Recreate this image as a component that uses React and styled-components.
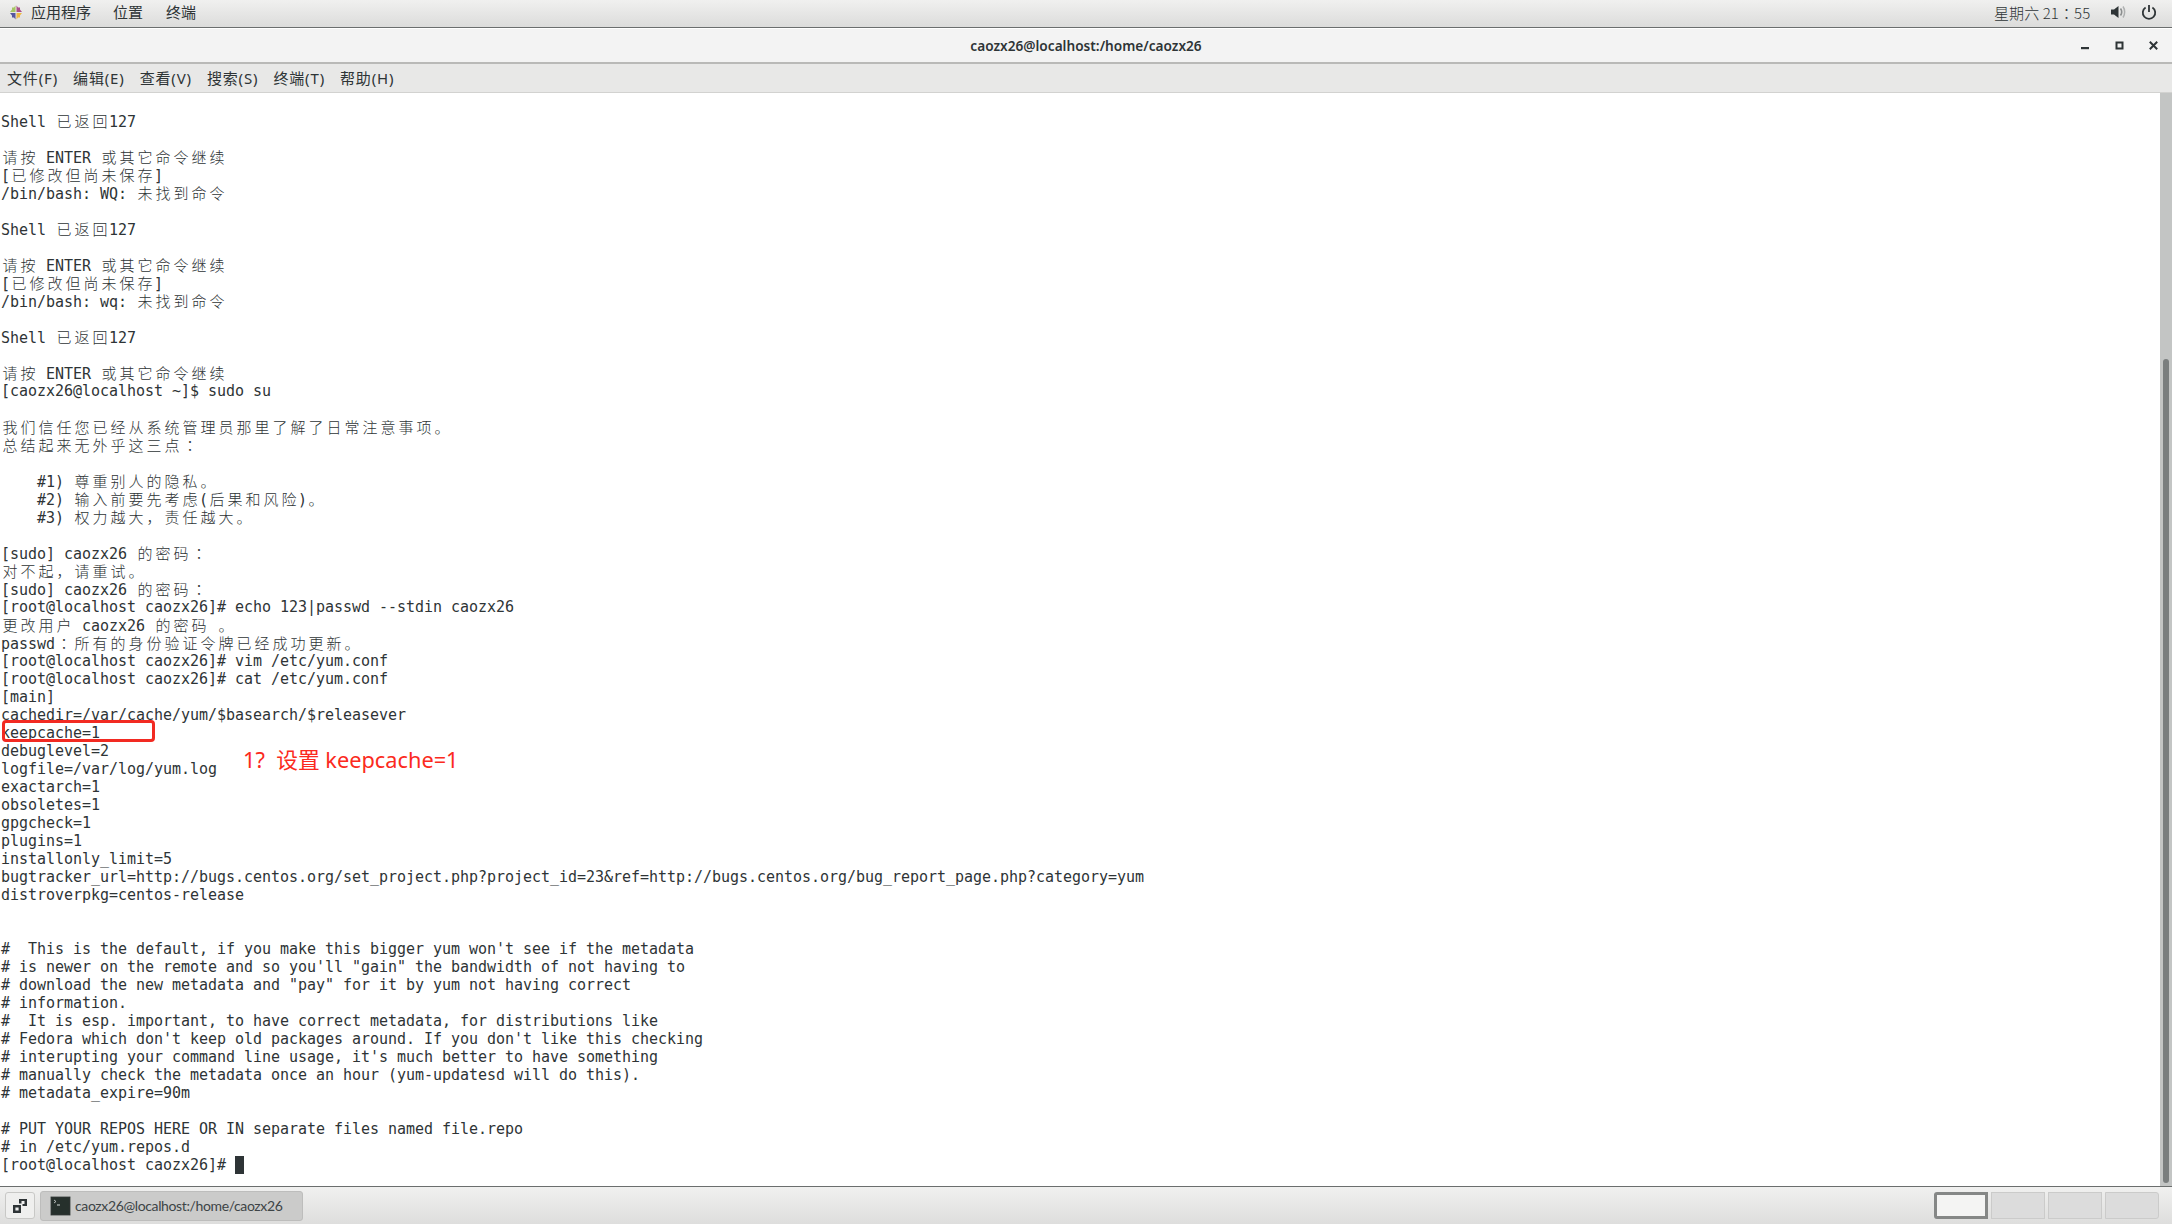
import React from "react";
import styled, { createGlobalStyle } from "styled-components";

const Global = createGlobalStyle`
  html, body { margin: 0; padding: 0; background: #fff; overflow: hidden; }
  * { box-sizing: border-box; }
`;

const UI = `"Noto Sans", "Noto Sans CJK SC", sans-serif`;
const CJK_UI = `"Noto Sans CJK SC", "Noto Sans", sans-serif`;

const Screen = styled.div`
  width: 2172px;
  height: 1224px;
  display: flex;
  flex-direction: column;
  overflow: hidden;
`;

const TopBar = styled.div`
  height: 28px;
  flex: none;
  display: flex;
  align-items: center;
  justify-content: space-between;
  padding: 0 15px 3px 9px;
  background: linear-gradient(#f0f0ef, #dcdcdb);
  border-bottom: 1px solid #6b6e6e;
  font: 15px ${CJK_UI};
  color: #2e3436;
`;

const TopGroup = styled.div`
  display: flex;
  align-items: center;
  gap: ${(p) => p.$gap}px;
`;

const TopItem = styled.span`
  margin-right: ${(p) => p.$mr || 0}px;
  white-space: nowrap;
  line-height: 24px;
`;

const Clock = styled.span`
  width: 98px;
  margin-right: 5px;
  white-space: nowrap;
  font-family: "Noto Sans CJK TC", sans-serif;
  font-weight: 300;
  letter-spacing: 0.1px;
`;

const TitleBar = styled.div`
  height: 36px;
  flex: none;
  position: relative;
  display: flex;
  align-items: center;
  justify-content: center;
  background: #f3f3f3;
  border-top: 1px solid #fff;
  border-bottom: 2px solid #b9b9b7;
  font: 600 13.65px ${UI};
  color: #2e3436;
`;

const WindowButtons = styled.div`
  position: absolute;
  right: 14px;
  top: 0;
  height: 100%;
  display: flex;
  align-items: center;
  gap: 25px;
`;

const MenuBar = styled.div`
  height: 29px;
  flex: none;
  display: flex;
  align-items: center;
  gap: 15px;
  padding: 0 0 2px 7px;
  background: #e8e8e7;
  border-bottom: 1px solid #d2d2d0;
  font: 15px ${CJK_UI};
  color: #2e3436;
`;

const MenuItem = styled.span`
  white-space: nowrap;
  font-family: ${UI};
  letter-spacing: 0.85px;
`;

const Content = styled.div`
  flex: 1;
  min-height: 0;
  display: flex;
  background: #fff;
`;

const Terminal = styled.div`
  flex: 1;
  position: relative;
  padding: 19px 0 0 1px;
  overflow: hidden;
  font: 15px/18px "DejaVu Sans Mono", "Noto Sans CJK SC", monospace;
  letter-spacing: -0.03px;
  color: #2e3436;
`;

const Line = styled.div`
  height: 18px;
  white-space: pre;
`;

const Wide = styled.span`
  letter-spacing: 3px;
  margin-left: 1.5px;
  margin-right: -1.5px;
  font-family: "Noto Sans CJK SC", sans-serif;
  font-weight: 300;
  color: #2e3436;
`;

const WideColon = styled(Wide)`
  font-family: "Noto Sans CJK TC", sans-serif;
`;

const Cursor = styled.span`
  display: inline-block;
  width: 9px;
  height: 18px;
  vertical-align: top;
  background: #2e3436;
`;

const Highlight = styled.div`
  position: absolute;
  left: 2px;
  top: 627px;
  width: 153px;
  height: 22px;
  border: 3px solid #f22a22;
  border-radius: 4px;
`;

const Note = styled.div`
  position: absolute;
  left: 243px;
  top: 651px;
  font: 21.75px/32px ${UI};
  letter-spacing: 0;
  color: #fb2a20;
  white-space: pre;
`;

const ScrollTrack = styled.div`
  width: 12px;
  flex: none;
  display: flex;
  flex-direction: column;
  align-items: center;
  padding: 266px 0 3px;
  background: #c3c5c4;
`;

const ScrollThumb = styled.div`
  flex: 1;
  width: 6px;
  border-radius: 3px;
  background: #7a7e7e;
`;

const TaskBar = styled.div`
  height: 38px;
  flex: none;
  display: flex;
  align-items: center;
  padding: 0 13px 0 5px;
  background: linear-gradient(#f0f0ef, #dededd);
  border-top: 1px solid #6b6e6e;
`;

const DesktopButton = styled.div`
  width: 30px;
  height: 27px;
  display: flex;
  align-items: center;
  justify-content: center;
  background: #efefee;
  border: 1px solid #c8c8c6;
  border-radius: 3px;
  margin-right: 5px;
`;

const WindowTask = styled.div`
  width: 263px;
  height: 30px;
  display: flex;
  align-items: center;
  gap: 4px;
  padding-left: 9px;
  background: #cbcbca;
  border: 1px solid #bdbdbc;
  border-radius: 3px;
  font: 14px "Lato", "Noto Sans", sans-serif;
  letter-spacing: -0.37px;
  color: #3d4446;
  white-space: nowrap;
  svg { flex: none; }
`;

const Pager = styled.div`
  margin-left: auto;
  display: flex;
  gap: 3px;
`;

const Workspace = styled.div`
  width: 54px;
  height: 27px;
  background: ${(p) => (p.$active ? "#f4f4f3" : "#dcdcdc")};
  border: ${(p) => (p.$active ? "3px solid #858786" : "1px solid #cbcbca")};
  border-radius: ${(p) => p.$radius || "0"};
`;

const LINES = `Shell 已返回127

请按 ENTER 或其它命令继续
[已修改但尚未保存]
/bin/bash: WQ: 未找到命令

Shell 已返回127

请按 ENTER 或其它命令继续
[已修改但尚未保存]
/bin/bash: wq: 未找到命令

Shell 已返回127

请按 ENTER 或其它命令继续
[caozx26@localhost ~]$ sudo su

我们信任您已经从系统管理员那里了解了日常注意事项。
总结起来无外乎这三点：

    #1) 尊重别人的隐私。
    #2) 输入前要先考虑(后果和风险)。
    #3) 权力越大，责任越大。

[sudo] caozx26 的密码：
对不起，请重试。
[sudo] caozx26 的密码：
[root@localhost caozx26]# echo 123|passwd --stdin caozx26
更改用户 caozx26 的密码 。
passwd：所有的身份验证令牌已经成功更新。
[root@localhost caozx26]# vim /etc/yum.conf
[root@localhost caozx26]# cat /etc/yum.conf
[main]
cachedir=/var/cache/yum/$basearch/$releasever
keepcache=1
debuglevel=2
logfile=/var/log/yum.log
exactarch=1
obsoletes=1
gpgcheck=1
plugins=1
installonly_limit=5
bugtracker_url=http://bugs.centos.org/set_project.php?project_id=23&ref=http://bugs.centos.org/bug_report_page.php?category=yum
distroverpkg=centos-release


#  This is the default, if you make this bigger yum won't see if the metadata
# is newer on the remote and so you'll "gain" the bandwidth of not having to
# download the new metadata and "pay" for it by yum not having correct
# information.
#  It is esp. important, to have correct metadata, for distributions like
# Fedora which don't keep old packages around. If you don't like this checking
# interupting your command line usage, it's much better to have something
# manually check the metadata once an hour (yum-updatesd will do this).
# metadata_expire=90m

# PUT YOUR REPOS HERE OR IN separate files named file.repo
# in /etc/yum.repos.d`.split("\n");

function WideRun({ text }) {
  return text
    .split(/(：)/)
    .filter(Boolean)
    .map((part, i) =>
      part === "：" ? <WideColon key={i}>{part}</WideColon> : <Wide key={i}>{part}</Wide>
    );
}

function TermLine({ text, children }) {
  const runs = (text || "").split(/([\u3000-\u9fff\uff00-\uffef]+)/);
  return (
    <Line>
      {runs.map((r, i) => (i % 2 ? <WideRun key={i} text={r} /> : r))}
      {children}
    </Line>
  );
}

const Logo = () => (
  <svg width="14" height="15" viewBox="0 0 14 15">
    <path d="M6.5 7H1L3 4.5 3 2.5 5 2.5 6.5 .5Z" fill="#a5c663" />
    <path d="M7.5 7V.5L9 2.5h2v2L13 7Z" fill="#a9508a" />
    <path d="M6.5 8v6.5L5 12.5H3v-2L1 8Z" fill="#55569f" />
    <path d="M7.5 8H13l-2 2.5v2H9L7.5 14.5Z" fill="#eeb945" />
  </svg>
);

const Volume = () => (
  <svg width="18" height="16" viewBox="0 0 18 16">
    <path d="M1 5.5h3L8.5 2v12L4 10.5H1z" fill="#2e3436" />
    <path d="M10.5 4.5c1.4 2 1.4 5 0 7" fill="none" stroke="#8b8e8e" strokeWidth="1.6" />
    <path d="M13 2.5c2.2 3 2.2 8 0 11" fill="none" stroke="#aeb0b0" strokeWidth="1.5" />
  </svg>
);

const Power = () => (
  <svg width="16" height="16" viewBox="0 0 16 16" fill="none" stroke="#2e3436" strokeWidth="1.8">
    <path d="M8 1v7" />
    <path d="M4.6 3.5a6.2 6.2 0 1 0 6.8 0" />
  </svg>
);

const MinIcon = () => (
  <svg width="9" height="9" viewBox="0 0 9 9"><rect x="0" y="6" width="8" height="2.2" fill="#2e3436" /></svg>
);
const MaxIcon = () => (
  <svg width="9" height="9" viewBox="0 0 9 9"><path d="M1.5 1.5h6v6h-6z" fill="none" stroke="#2e3436" strokeWidth="2" /></svg>
);
const CloseIcon = () => (
  <svg width="9" height="9" viewBox="0 0 9 9"><path d="M.8.8l7.4 7.4M8.2.8L.8 8.2" stroke="#2e3436" strokeWidth="2" /></svg>
);

const DesktopIcon = () => (
  <svg width="14" height="14" viewBox="0 0 14 14">
    <path d="M0 6h8v8H0z M2.4 8.4v3.2h3.2V8.4z" fill="#2e3436" fillRule="evenodd" />
    <path d="M6 0h8v7H9.5V5h2V2h-3v2.5H6z" fill="#2e3436" />
  </svg>
);

const TermIcon = () => (
  <svg width="21" height="20" viewBox="0 0 21 20">
    <rect x=".5" y=".5" width="20" height="19" rx="1" fill="#2c3230" stroke="#8d918f" />
    <rect x="2" y="2" width="17" height="16" fill="#26302c" />
    <path d="M4 4l2 1.5L4 7" fill="none" stroke="#d8dcda" strokeWidth=".8" />
    <path d="M7 9h3" stroke="#d8dcda" strokeWidth="1" />
  </svg>
);

export default function App() {
  return (
    <Screen>
      <Global />
      <TopBar>
        <TopGroup $gap={8}>
          <Logo />
          <TopItem $mr={14}>应用程序</TopItem>
          <TopItem $mr={15}>位置</TopItem>
          <TopItem>终端</TopItem>
        </TopGroup>
        <TopGroup $gap={13}>
          <Clock>星期六 21：55</Clock>
          <Volume />
          <Power />
        </TopGroup>
      </TopBar>
      <TitleBar>
        caozx26@localhost:/home/caozx26
        <WindowButtons>
          <MinIcon />
          <MaxIcon />
          <CloseIcon />
        </WindowButtons>
      </TitleBar>
      <MenuBar>
        <MenuItem>文件(F)</MenuItem>
        <MenuItem>编辑(E)</MenuItem>
        <MenuItem>查看(V)</MenuItem>
        <MenuItem>搜索(S)</MenuItem>
        <MenuItem>终端(T)</MenuItem>
        <MenuItem>帮助(H)</MenuItem>
      </MenuBar>
      <Content>
        <Terminal>
          {LINES.map((l, i) => (
            <TermLine key={i} text={l} />
          ))}
          <TermLine text="[root@localhost caozx26]# ">
            <Cursor />
          </TermLine>
          <Highlight />
          <Note>1?  设置 keepcache=1</Note>
        </Terminal>
        <ScrollTrack>
          <ScrollThumb />
        </ScrollTrack>
      </Content>
      <TaskBar>
        <DesktopButton>
          <DesktopIcon />
        </DesktopButton>
        <WindowTask>
          <TermIcon />
          caozx26@localhost:/home/caozx26
        </WindowTask>
        <Pager>
          <Workspace $active $radius="3px 0 0 3px" />
          <Workspace />
          <Workspace />
          <Workspace $radius="0 3px 3px 0" />
        </Pager>
      </TaskBar>
    </Screen>
  );
}
